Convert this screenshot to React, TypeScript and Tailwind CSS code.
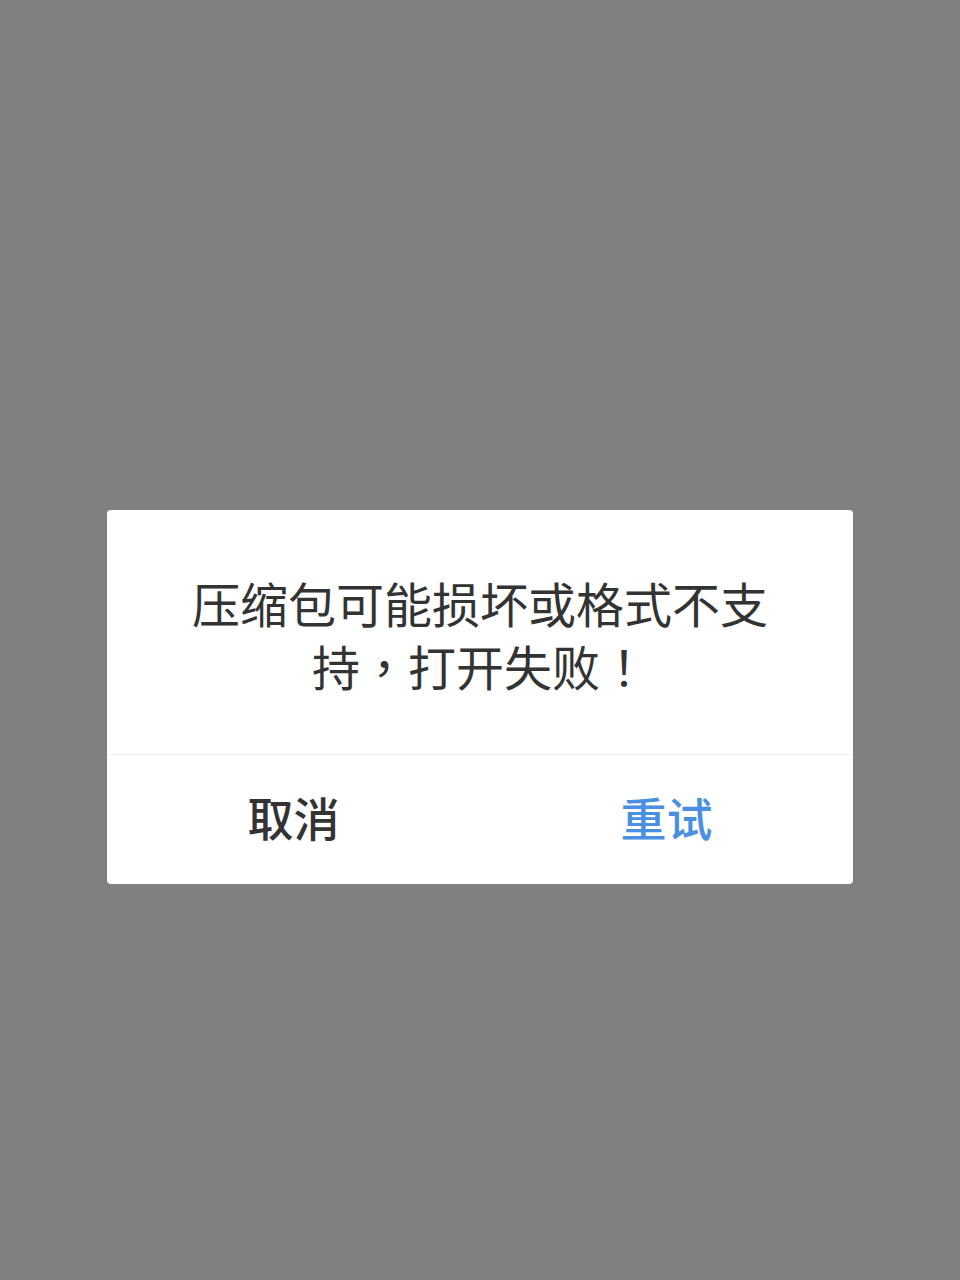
export default function App() {
  return (
    <div
      className="flex h-[1280px] w-[960px] items-center justify-center bg-[#808080]"
      style={{ fontFamily: '"Noto Sans CJK SC", "Noto Sans", sans-serif' }}
    >
      <div className="mt-[114px] w-[746px] overflow-hidden rounded-[4px] bg-white">
        <div className="flex h-[244px] items-center justify-center pt-[3px] text-center text-[48px] leading-[63px] text-[#333333]">
          <p className="whitespace-nowrap">
            压缩包可能损坏或格式不支
            <br />
            持<span style={{ fontFamily: '"Noto Sans CJK TC", sans-serif' }}>，</span>打开失败
            <span style={{ fontFamily: '"Noto Sans CJK TC", sans-serif' }}>！</span>
          </p>
        </div>
        <div className="h-px bg-[#eeeeee]" />
        <div className="flex h-[129px]">
          <button className="flex flex-1 items-center justify-center pb-[6px] text-[46px] font-medium text-[#333333]">
            取消
          </button>
          <button className="flex flex-1 items-center justify-center pb-[6px] text-[46px] font-medium text-[#4a90e2]">
            重试
          </button>
        </div>
      </div>
    </div>
  );
}
